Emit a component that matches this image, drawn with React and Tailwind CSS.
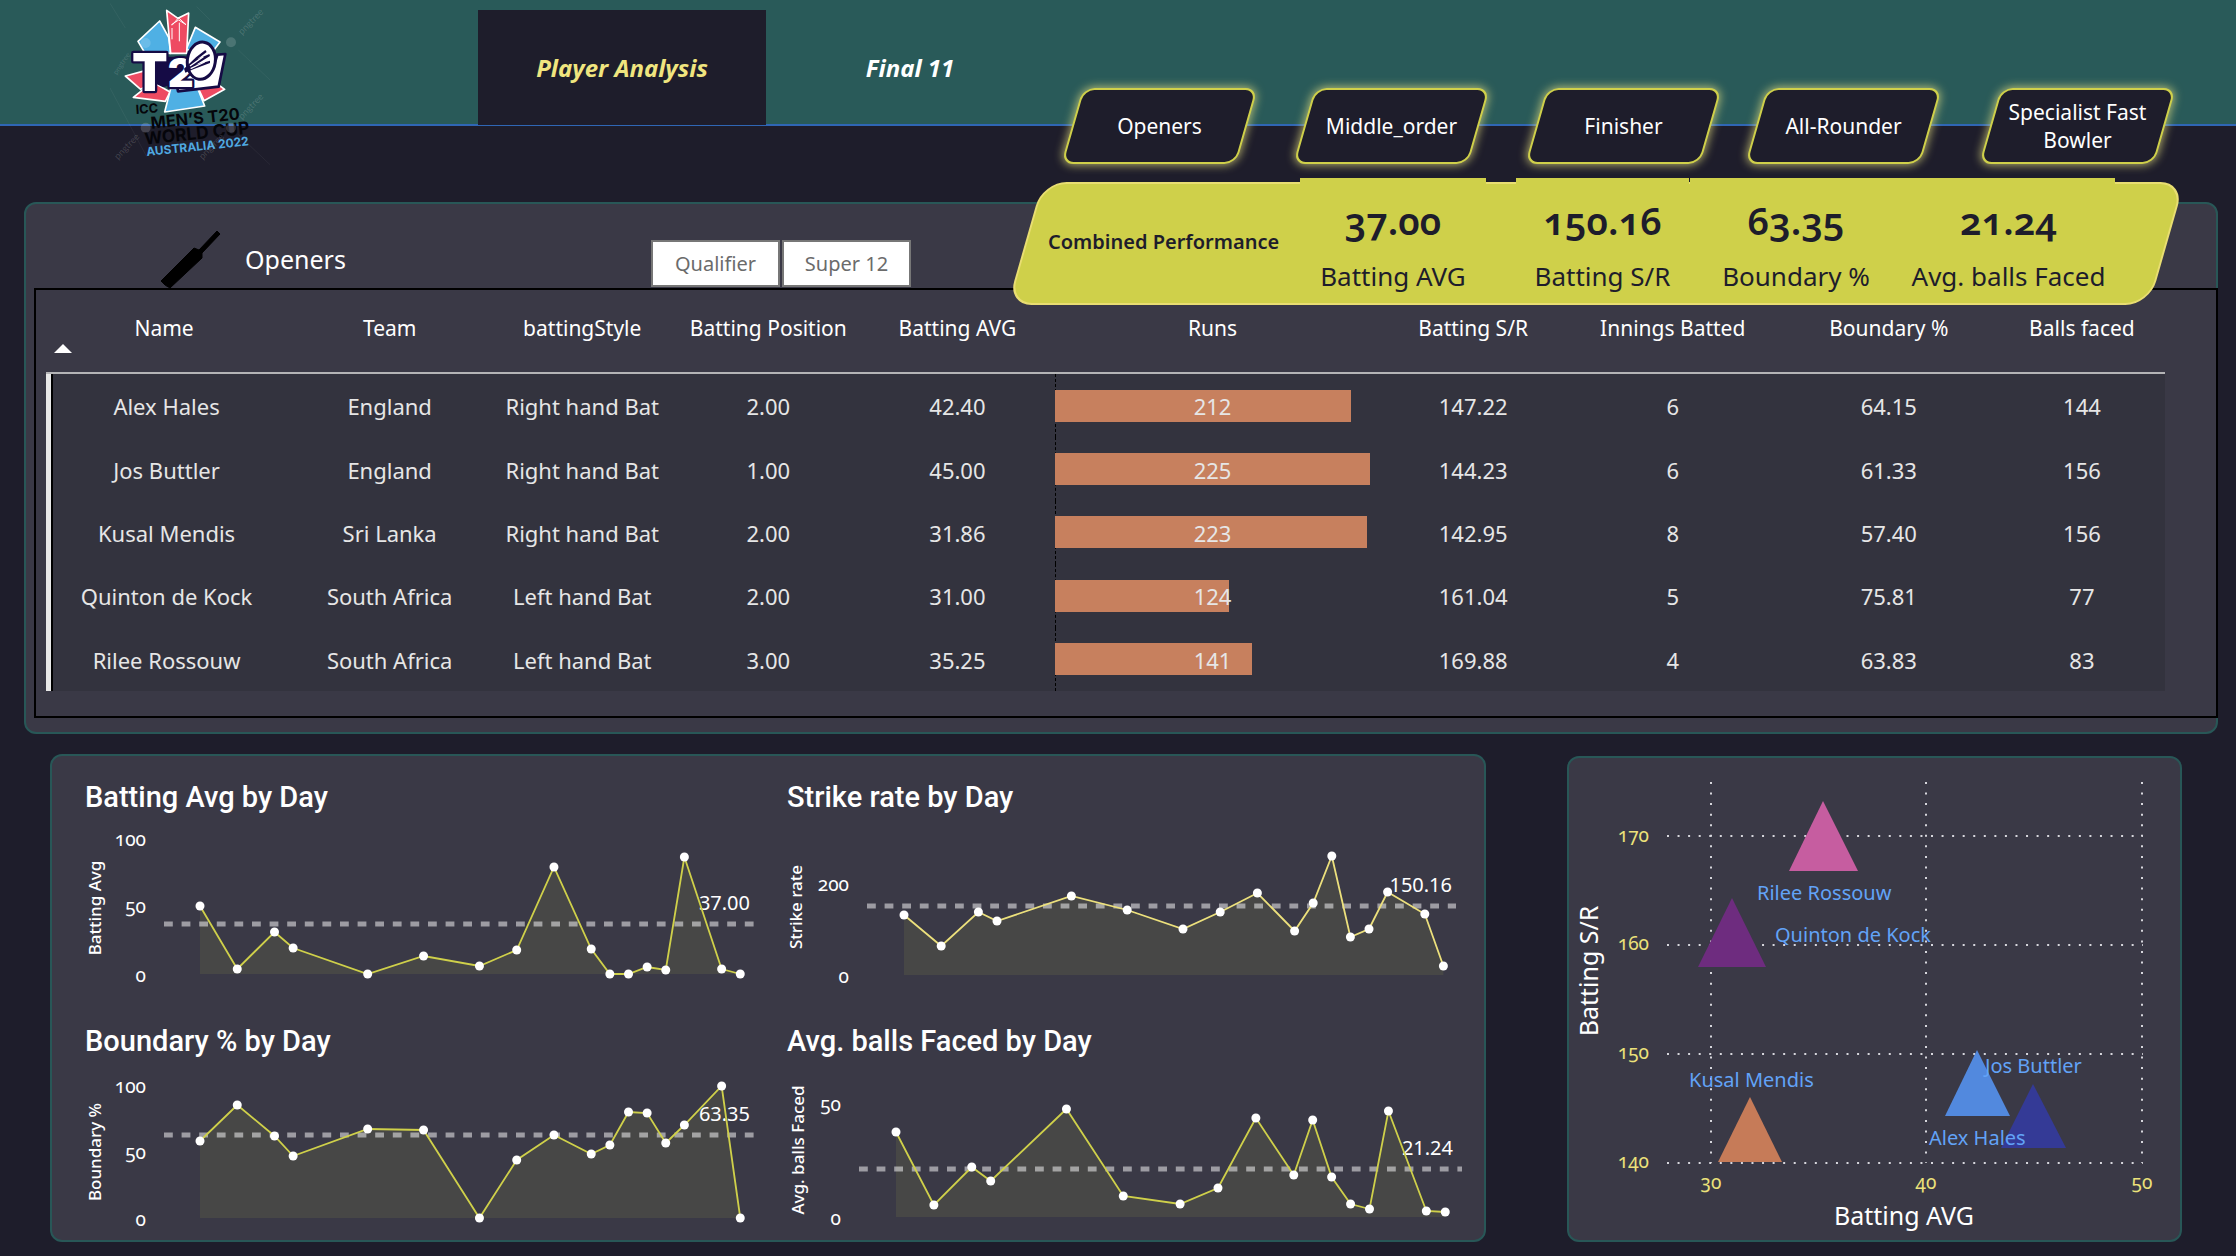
import React from "react";

const roles = ["Openers", "Middle_order", "Finisher", "All-Rounder", "Specialist Fast Bowler"];

const columns = [
  { label: "Name", width: "w-[236px]" },
  { label: "Team", width: "w-[215px]" },
  { label: "battingStyle", width: "w-[170px]" },
  { label: "Batting Position", width: "w-[202px]" },
  { label: "Batting AVG", width: "w-[176px]" },
  { label: "Runs", width: "w-[334px]" },
  { label: "Batting S/R", width: "w-[187px]" },
  { label: "Innings Batted", width: "w-[212px]" },
  { label: "Boundary %", width: "w-[220px]" },
  { label: "Balls faced", width: "w-[166px]" },
];

const players = [
  ["Alex Hales", "England", "Right hand Bat", "2.00", "42.40", 212, "147.22", "6", "64.15", "144"],
  ["Jos Buttler", "England", "Right hand Bat", "1.00", "45.00", 225, "144.23", "6", "61.33", "156"],
  ["Kusal Mendis", "Sri Lanka", "Right hand Bat", "2.00", "31.86", 223, "142.95", "8", "57.40", "156"],
  ["Quinton de Kock", "South Africa", "Left hand Bat", "2.00", "31.00", 124, "161.04", "5", "75.81", "77"],
  ["Rilee Rossouw", "South Africa", "Left hand Bat", "3.00", "35.25", 141, "169.88", "4", "63.83", "83"],
];

const totals = [
  { value: "37.00", label: "Batting AVG", width: "w-[186px] mr-[30px]" },
  { value: "150.16", label: "Batting S/R", width: "w-[173px] mr-px" },
  { value: "63.35", label: "Boundary %", width: "w-[212px]" },
  { value: "21.24", label: "Avg. balls Faced", width: "w-[213px]" },
];

const days = [0, 2, 4, 5, 9, 12, 15, 17, 19, 21, 22, 23, 24, 25, 26, 28, 29];

const trends = [
  {
    title: "Batting Avg by Day", axis: "Batting Avg", axisX: 21, axisY: 88, average: "37.00", averageY: 104, labelY: 90,
    x0: 120, step: 18.63, base: 154, line: "#cfd04a", tickX: 66, from: 84, to: 674, labelX: 670,
    ticks: [["100", 26], ["50", 93], ["0", 162]],
    y: [86, 149, 112, 128, 154, 136, 146, 130, 47, 129, 154, 154, 147, 150, 37, 149, 154],
  },
  {
    title: "Strike rate by Day", axis: "Strike rate", axisX: 20, axisY: 87, average: "150.16", averageY: 86, labelY: 72,
    x0: 122, step: 18.6, base: 155, line: "#ece07c", tickX: 67, from: 85, to: 674, labelX: 670,
    ticks: [["200", 71], ["0", 163]],
    y: [95, 126, 92, 101, 76, 90, 109, 92, 73, 111, 83, 36, 117, 109, 72, 94, 146],
  },
  {
    title: "Boundary % by Day", axis: "Boundary %", axisX: 21, axisY: 88, average: "63.35", averageY: 71, labelY: 57,
    x0: 120, step: 18.63, base: 154, line: "#cfd04a", tickX: 66, from: 84, to: 674, labelX: 670,
    ticks: [["100", 29], ["50", 95], ["0", 162]],
    y: [77, 41, 72, 92, 65, 66, 154, 96, 71, 90, 81, 48, 49, 79, 61, 22, 154],
  },
  {
    title: "Avg. balls Faced by Day", axis: "Avg. balls Faced", axisX: 22, axisY: 86, average: "21.24", averageY: 105, labelY: 91,
    x0: 114, step: 18.94, base: 153, line: "#cfd04a", tickX: 59, from: 77, to: 680, labelX: 671,
    ticks: [["50", 47], ["0", 161]],
    y: [68, 141, 103, 117, 45, 132, 140, 124, 54, 111, 56, 113, 140, 145, 47, 147, 148],
  },
];

function Logo() {
  return (
    <svg viewBox="0 0 480 495" className="ml-[110px] h-[165px] w-[160px] shrink-0" role="img" aria-label="ICC Men's T20 World Cup Australia 2022">
      <g stroke="#fff" strokeWidth="5" strokeLinejoin="round">
        <path d="M84 124 L149 63 L176 112 L182 160 L104 158 Z" fill="#4fb0e4" />
        <path d="M228 150 L256 82 L330 126 L312 150 Z" fill="#4fb0e4" />
        <path d="M170 31 L204 55 L236 39 L230 160 L182 160 Z" fill="#ee4b62" />
        <path d="M46 228 L120 208 L132 246 L92 268 Z" fill="#ee4b62" />
        <path d="M70 292 L128 246 L180 276 L166 304 Z" fill="#ee4b62" />
        <path d="M258 250 L322 252 L344 268 L282 302 Z" fill="#ee4b62" />
        <path d="M182 266 L262 262 L284 318 L164 336 Z" fill="#4fb0e4" />
      </g>
      <path d="M184 74 L206 60 L228 74 M204 52 L228 74 M186 84 L186 118 M208 68 L208 124 M204 55 L186 76" stroke="#fff" strokeWidth="3" fill="none" />
      <path d="M130 170 L240 170 L226 240 L160 262 L134 250 Z" fill="#150b45" />
      <path d="M196 232 L240 222 Q306 230 322 164 L346 162 L326 260 L204 274 Z" fill="#fff" stroke="#150b45" strokeWidth="8" strokeLinejoin="round" />
      <text x="66" y="274" fontSize="156" fill="#fff" stroke="#150b45" strokeWidth="14" strokeLinejoin="round" fontFamily="Inter, sans-serif" fontWeight="900" style={{ paintOrder: "stroke" }}>
        T<tspan fontSize="120" dy="-14">2</tspan>
      </text>
      <ellipse cx="274" cy="182" rx="42" ry="56" transform="rotate(8 274 182)" fill="#fff" stroke="#150b45" strokeWidth="9" />
      <path d="M222 206 L258 172 L286 150 L290 156 L262 178 L298 162 L300 168 L258 194 L300 182 L300 189 L250 208 L226 218 Z" fill="#150b45" />
      <path d="M240 198 L280 170 M242 206 L284 186" stroke="#fff" strokeWidth="4" />
      <g fontFamily="Inter, sans-serif" fontWeight="700" fill="#05050a">
        <text x="78" y="342" fontSize="38" transform="rotate(-4 78 342)">ICC</text>
        <text x="124" y="386" fontSize="49" transform="rotate(-6 124 386)">MEN’S T20</text>
        <text x="105" y="434" fontSize="52" transform="rotate(-6 105 434)">WORLD CUP</text>
        <text x="110" y="468" fontSize="36" fill="#4fa8e0" transform="rotate(-6 110 468)">AUSTRALIA 2022</text>
      </g>
      <g fill="#fff" fillOpacity="0.16" fontFamily="Lato, sans-serif" fontSize="28">
        <circle cx="363" cy="127" r="15" />
        <circle cx="107" cy="129" r="15" />
        <circle cx="107" cy="383" r="15" />
        <circle cx="363" cy="383" r="15" />
        <text x="20" y="226" fontSize="22" transform="rotate(-56 20 226)">pngtree</text>
        <text x="396" y="106" transform="rotate(-46 396 106)">pngtree</text>
        <text x="396" y="360" transform="rotate(-46 396 360)">pngtree</text>
        <text x="24" y="480" transform="rotate(-46 24 480)">pngtree</text>
        <text x="278" y="480" transform="rotate(-46 278 480)">pngtree</text>
      </g>
      <path d="M0 10 L46 84 M385 150 L480 240 M0 264 L110 470 M385 404 L480 494 M260 20 L300 60" stroke="#fff" strokeOpacity="0.08" strokeWidth="2" />
    </svg>
  );
}

function BatIcon() {
  return (
    <svg viewBox="0 0 60 58" className="ml-[135px] h-[58px] w-[60px]" aria-hidden="true">
      <path d="M56 1 L59 4 L41 23 L41 28 L9 58 Q4 56 0 51 L33 18 L38 20 Z" fill="#000" stroke="#000" strokeLinejoin="round" />
    </svg>
  );
}

function RunsCell({ runs }) {
  return (
    <div className="mr-[9px] ml-[10px] flex h-full items-center border-l border-dashed border-black">
      <div className="-ml-px grid w-full items-center">
        <div className="col-start-1 row-start-1 h-8 bg-[#c7805e]" style={{ width: `${(runs / 225) * 100}%` }} />
        <span className="col-start-1 row-start-1 pt-0.5 text-center">{runs}</span>
      </div>
    </div>
  );
}

function TrendChart({ t }) {
  const points = days.map((d, i) => [t.x0 + d * t.step, t.y[i]]);
  const line = points.map((p) => p.join(",")).join(" ");
  const area = `${t.x0},${t.base} ${line} ${points[points.length - 1][0]},${t.base}`;
  return (
    <figure className="min-w-0">
      <figcaption className="pl-[5px] font-['Roboto',sans-serif] text-[29px] leading-10 font-medium">{t.title}</figcaption>
      <svg viewBox="0 0 702 166" className="mt-[3px] block h-auto w-full overflow-visible" role="img" aria-label={t.title}>
        <polygon points={area} fill="#474746" />
        <line x1={t.from} x2={t.to} y1={t.averageY} y2={t.averageY} stroke="#fff" strokeOpacity="0.5" strokeWidth="5" strokeDasharray="8.8 8.8" />
        <text x={t.labelX} y={t.labelY} textAnchor="end" fill="#fff" fontSize="20">{t.average}</text>
        <polyline points={line} fill="none" stroke={t.line} strokeWidth="1.8" />
        {points.map(([x, y]) => <circle key={x} cx={x} cy={y} r="4.5" fill="#fff" />)}
        <g fill="#fff" fontSize="19" textAnchor="end" className="oldstyle-nums">
          {t.ticks.map(([label, y]) => <text key={label} x={t.tickX} y={y}>{label}</text>)}
        </g>
        <text x={t.axisX} y={t.axisY} transform={`rotate(-90 ${t.axisX} ${t.axisY})`} textAnchor="middle" fill="#fff" fontSize="17" fontWeight="500">{t.axis}</text>
      </svg>
    </figure>
  );
}

function ScatterChart() {
  return (
    <svg viewBox="1 0 611 482" className="block h-auto w-full" role="img" aria-label="Batting S/R by Batting AVG">
      <g stroke="#d6d6dc" strokeWidth="2" strokeDasharray="2 8.56">
        {[78, 187, 296, 405].map((y) => <line key={y} x1="99" x2="575" y1={y} y2={y} />)}
        {[143, 358, 574].map((x) => <line key={x} x1={x} x2={x} y1="24" y2="405" />)}
      </g>
      <polygon points="255,43 290,113 221,113" fill="#c65da0" />
      <polygon points="164,140 198,209 130,209" fill="#6e2c7f" />
      <polygon points="182,339 214,404 150,404" fill="#c67b58" />
      <polygon points="465,326 498,390 433,390" fill="#343a96" />
      <polygon points="409,292 442,358 377,358" fill="#5289de" />
      <g fill="#62a3f7" fontSize="20">
        <text x="189" y="142">Rilee Rossouw</text>
        <text x="207" y="184">Quinton de Kock</text>
        <text x="121" y="329">Kusal Mendis</text>
        <text x="417" y="315">Jos Buttler</text>
        <text x="361" y="387">Alex Hales</text>
      </g>
      <g fill="#ece27a" fontSize="19" className="oldstyle-nums">
        <g textAnchor="end">
          <text x="81" y="84">170</text>
          <text x="81" y="192">160</text>
          <text x="81" y="301">150</text>
          <text x="81" y="410">140</text>
        </g>
        <g textAnchor="middle">
          <text x="143" y="431">30</text>
          <text x="358" y="431">40</text>
          <text x="574" y="431">50</text>
        </g>
      </g>
      <g fill="#fff" fontSize="25" textAnchor="middle">
        <text x="336" y="467">Batting AVG</text>
        <text x="30" y="213" transform="rotate(-90 30 213)">Batting S/R</text>
      </g>
    </svg>
  );
}

export default function App() {
  return (
    <div className="min-h-screen overflow-hidden bg-[#1e1d2b] pb-3.5 font-['Noto_Sans',sans-serif] text-white">
      <header className="flex h-[126px] items-start border-b-2 border-[#2f66b5] bg-[#295a59]">
        <Logo />
        <nav className="ml-[208px] flex pt-[10px] text-2xl font-bold italic">
          <a href="#player-analysis" className="flex h-[115px] w-72 items-center justify-center bg-[#1e1d2b] text-[#f0e57f]">Player Analysis</a>
          <a href="#final-11" className="flex h-[115px] w-72 items-center justify-center">Final 11</a>
        </nav>
      </header>

      <div className="relative -mt-[38px] grid grid-cols-[232px_232px_220px_234px_191px] justify-end pr-[63px]">
        {roles.map((role) => (
          <button key={role} type="button" className="relative flex h-[76px] w-[191px] items-center justify-center px-5 text-[21px] leading-7">
            <span className="absolute inset-x-2 inset-y-0 -skew-x-[16deg] rounded-xl border-2 border-[#cfd04a] bg-[#1e1d2b] shadow-[0_0_9px_1px_rgba(232,226,130,0.75)]" />
            <span className="relative">{role}</span>
          </button>
        ))}
      </div>

      <section className="relative mt-[38px] mr-[18px] ml-6 rounded-xl border-2 border-[#285757] bg-[#3a3946]">
        <div className="flex h-[84px] items-end">
          <BatIcon />
          <h2 className="ml-6 pb-[11px] text-[25px] leading-9">Openers</h2>
          <div className="mb-px ml-auto flex w-[1565px] gap-0.5 text-xl text-[#6b6b6b]">
            <button type="button" className="h-[47px] w-[129px] border-2 border-[#777] bg-white">Qualifier</button>
            <button type="button" className="h-[47px] w-[129px] border-2 border-[#777] bg-white">Super 12</button>
          </div>
        </div>

        <div className="-mr-0.5 ml-2 border-2 border-black pr-[51px] pb-[25px] pl-[10px]">
          <table className="h-[401px] w-full table-fixed border-separate border-spacing-0 text-center">
            <thead>
              <tr className="text-[21px] leading-[30px]">
                {columns.map((c, i) => (
                  <th key={c.label} scope="col" className={`${c.width} relative h-[84px] border-b-2 border-[#b4b4b6] pt-[23px] align-top font-normal whitespace-nowrap`}>
                    {c.label}
                    {i === 0 && (
                      <svg viewBox="0 0 18 9" className="absolute top-[54px] left-2 h-[9px] w-[18px]" aria-hidden="true">
                        <path d="M0 9 L9 0 L18 9 Z" fill="#fff" />
                      </svg>
                    )}
                  </th>
                ))}
              </tr>
            </thead>
            <tbody className="bg-[#33333e] text-[22px] text-[#e6e6e6]">
              {players.map((row) => (
                <tr key={row[0]} className="h-[63px]">
                  {row.map((cell, i) => (
                    <td
                      key={i}
                      className={`h-[63px] whitespace-nowrap ${i === 0 ? "border-l-[5px] border-[#e8e8e8] shadow-[inset_2px_0_0_#000]" : ""} ${i === 5 ? "p-0" : "p-0 pt-0.5"}`}
                    >
                      {i === 5 ? <RunsCell runs={cell} /> : cell}
                    </td>
                  ))}
                </tr>
              ))}
            </tbody>
          </table>
        </div>
        <div className="h-3.5" />

        <div className="absolute -top-[22px] right-[37px] flex h-[123px] w-[1166px] items-start pl-[35px] text-[#1e1d2b]">
          <div className="absolute inset-x-3 inset-y-0 -skew-x-[16deg] rounded-3xl border-2 border-[#e9de72] bg-[#cfd04a]" />
          <h3 className="relative w-[252px] self-center pb-1 text-xl font-semibold">Combined Performance</h3>
          {totals.map((t) => (
            <div key={t.label} className={`${t.width} relative -mt-1 bg-[#cfd04a] pt-[18px] text-center whitespace-nowrap`}>
              <div className="text-[38px] leading-[48px] font-semibold oldstyle-nums">{t.value}</div>
              <div className="mt-[14px] text-[26px] leading-9">{t.label}</div>
            </div>
          ))}
        </div>
      </section>

      <div className="mt-5 grid grid-cols-[1436fr_615fr] items-start gap-x-[81px] pr-[54px] pl-[50px]">
        <section className="grid grid-cols-2 gap-y-[35px] rounded-xl border-2 border-[#285757] bg-[#3a3946] pt-[21px] pb-[10px] pl-7">
          {trends.map((t) => <TrendChart key={t.title} t={t} />)}
        </section>
        <section className="mt-0.5 rounded-xl border-2 border-[#285757] bg-[#3a3946]">
          <ScatterChart />
        </section>
      </div>
    </div>
  );
}
